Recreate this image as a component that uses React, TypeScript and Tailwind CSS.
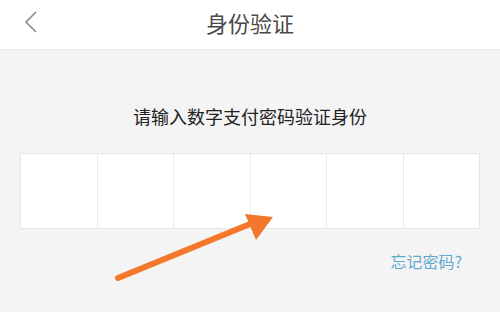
import React from 'react';

const font = { fontFamily: '"Noto Sans CJK SC", "Noto Sans", sans-serif' };

export default function App() {
  const cells = [0, 1, 2, 3, 4, 5];
  return (
    <div className="relative w-[500px] h-[312px] overflow-hidden bg-[#f4f4f4]" style={font}>
      <header className="relative h-[50px] bg-white border-b border-[#e9e9e9] flex items-center justify-center">
        <svg className="absolute left-[24px] top-[11px]" width="14" height="22" viewBox="0 0 14 22">
          <path d="M12 1 L2 11 L12 21" fill="none" stroke="#8a8a8a" strokeWidth="1.6" />
        </svg>
        <h1 className="text-[22px] leading-none text-[#4a4a4a] -mt-[6px]">身份验证</h1>
      </header>

      <p className="mt-[54px] text-center text-[18px] leading-[24px] text-[#222]">请输入数字支付密码验证身份</p>

      <div className="mx-[20px] mt-[25px] h-[76px] flex bg-white border border-[#e6e6e6]">
        {cells.map((i) => (
          <div key={i} className={i < 5 ? 'flex-1 border-r border-[#ebebeb]' : 'flex-1'} />
        ))}
      </div>

      <div className="flex justify-end pr-[38px] mt-[22px]">
        <span className="text-[16px] leading-[20px] text-[#5ea9cf]">忘记密码?</span>
      </div>

      <svg className="absolute left-0 top-0 pointer-events-none" width="500" height="312" viewBox="0 0 500 312">
        <line x1="118" y1="278" x2="255" y2="222" stroke="#f5772b" strokeWidth="6" strokeLinecap="round" />
        <polygon points="273,217 245,214 256,240" fill="#f5772b" />
      </svg>
    </div>
  );
}
